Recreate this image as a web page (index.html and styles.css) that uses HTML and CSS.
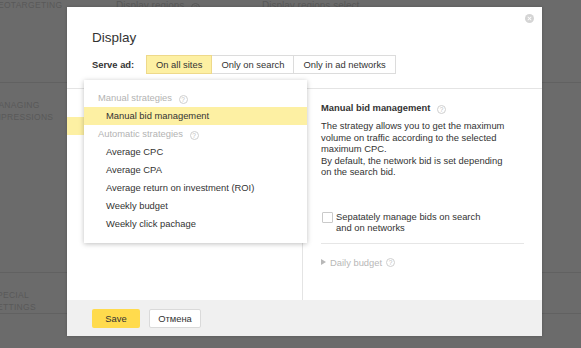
FILE: index.html
```html
<!DOCTYPE html>
<html lang="en">
<head>
  <meta charset="UTF-8">
  <title>Display strategy</title>
  <link rel="stylesheet" href="styles.css">
</head>
<body>

<!-- Campaign page behind the dialog -->
<div class="page">
  <div class="section section-geo">
    <div class="section-title">Geotargeting</div>
    <div class="section-field">Display regions <span class="hint">?</span></div>
    <div class="section-field">Display regions select</div>
  </div>
  <div class="section section-impressions">
    <div class="section-title">Managing<br>impressions</div>
  </div>
  <div class="section section-special">
    <div class="section-title">Special<br>settings</div>
  </div>
</div>

<!-- Dialog -->
<div class="modal">
  <div class="modal-head">
    <h2 class="modal-title">Display</h2>
    <div class="serve-row">
      <span class="serve-label">Serve ad:</span>
      <div class="seg">
        <button class="seg-btn seg-btn-active">On all sites</button>
        <button class="seg-btn">Only on search</button>
        <button class="seg-btn">Only in ad networks</button>
      </div>
    </div>
    <span class="close-btn"></span>
  </div>

  <div class="modal-body">
    <div class="body-left">
      <div class="strategy-current"></div>
    </div>
    <div class="body-right">
      <div class="info-title">Manual bid management <span class="hint">?</span></div>
      <p class="info-text">
        The strategy allows you to get the maximum<br>
        volume on traffic according to the selected<br>
        maximum CPC.<br>
        By default, the network bid is set depending<br>
        on the search bid.
      </p>
      <label class="check-row">
        <span class="checkbox"></span>
        <span>Sepatately manage bids on search<br>and on networks</span>
      </label>
      <div class="daily-budget"><span class="arrow"></span>Daily budget <span class="hint">?</span></div>
    </div>
  </div>

  <div class="modal-foot">
    <button class="btn btn-save">Save</button>
    <button class="btn btn-cancel">Отмена</button>
  </div>

  <!-- Strategy dropdown -->
  <div class="dropdown">
    <div class="dd-group">Manual strategies <span class="hint">?</span></div>
    <div class="dd-item dd-item-active">Manual bid management</div>
    <div class="dd-group">Automatic strategies <span class="hint">?</span></div>
    <div class="dd-item">Average CPC</div>
    <div class="dd-item">Average CPA</div>
    <div class="dd-item">Average return on investment (ROI)</div>
    <div class="dd-item">Weekly budget</div>
    <div class="dd-item">Weekly click pachage</div>
  </div>
</div>

</body>
</html>
```

FILE: styles.css
```css
/* Reset */
* {
  margin: 0;
  padding: 0;
  box-sizing: border-box;
}
body {
  font-family: "Liberation Sans", Arial, sans-serif;
  font-size: 9.4px;
  color: #333;
  background-color: #6b6b6b;
  width: 581px;
  height: 348px;
  overflow: hidden;
  position: relative;
}

/* Page behind the overlay */
.section {
  border-bottom: 1px solid #616161;
  display: grid;
  grid-template-columns: 116px 146px 1fr;
}
.section-title {
  margin-left: -9px;
  text-transform: uppercase;
  font-size: 8.5px;
  letter-spacing: 0.3px;
  line-height: 11.5px;
  color: #595959;
}
.section-field {
  color: #595959;
  line-height: 11.5px;
  font-size: 10px;
}
.section-geo {
  height: 83px;
  padding-top: 0;
}
.section-impressions {
  height: 190px;
  padding-top: 17px;
}
.section-special {
  padding-top: 17px;
}

/* Dialog */
.modal {
  position: absolute;
  left: 67px;
  top: 7px;
  width: 475px;
  height: 329px;
  background-color: white;
  box-shadow: 0 0 3px rgba(0,0,0,0.2);
  display: flex;
  flex-direction: column;
}
.modal-head {
  position: relative;
  height: 82px;
  padding: 23px 25px 0;
  border-bottom: 1px solid #e4e4e4;
}
.modal-title {
  font-size: 13.5px;
  font-weight: normal;
  line-height: 16px;
  color: #333;
}
.serve-row {
  display: flex;
  align-items: center;
  margin-top: 9px;
}
.serve-label {
  width: 55px;
  font-weight: bold;
}
.seg {
  display: flex;
}
.seg-btn {
  font-family: inherit;
  font-size: 9.4px;
  color: #333;
  height: 19px;
  padding: 0 9px;
  background-color: white;
  border: 1px solid #dcdcdc;
  margin-left: -1px;
}
.seg-btn-active {
  background-color: #fdf0a3;
  border-color: #eed98a;
  position: relative;
}
.close-btn {
  position: absolute;
  top: 7px;
  right: 8px;
  width: 9px;
  height: 9px;
  border-radius: 50%;
  background-color: #d4d4d4;
}
.close-btn::before,
.close-btn::after {
  content: "";
  position: absolute;
  left: 2px;
  top: 4px;
  width: 5px;
  height: 1px;
  background-color: white;
  transform: rotate(45deg);
}
.close-btn::after {
  transform: rotate(-45deg);
}

.modal-body {
  flex: 1;
  display: flex;
}
.body-left {
  width: 236px;
  border-right: 1px solid #e4e4e4;
}
.strategy-current {
  margin-top: 28px;
  height: 18px;
  background-color: #fdf0a3;
}
.body-right {
  flex: 1;
  padding: 13px 18px 0 18px;
}
.info-title {
  font-weight: bold;
  line-height: 12px;
}
.info-text {
  margin-top: 6px;
  line-height: 11.5px;
}
.check-row {
  display: flex;
  margin-top: 33px;
  padding-bottom: 9px;
  border-bottom: 1px solid #e6e6e6;
  line-height: 11.5px;
}
.checkbox {
  width: 11px;
  height: 11px;
  margin: 1px 3px 0 1px;
  border: 1px solid #cacaca;
  border-radius: 1px;
  flex-shrink: 0;
}
.daily-budget {
  margin-top: 13px;
  line-height: 11.5px;
  color: #b8b8b8;
  display: flex;
  align-items: center;
}
.arrow {
  width: 0;
  height: 0;
  border-left: 5px solid #b8b8b8;
  border-top: 3px solid transparent;
  border-bottom: 3px solid transparent;
  margin-right: 4px;
}

.hint {
  display: inline-block;
  width: 9px;
  height: 9px;
  margin-left: 4px;
  border: 1px solid #cfcfcf;
  border-radius: 50%;
  font-size: 6.5px;
  font-weight: normal;
  line-height: 7px;
  text-align: center;
  color: #c0c0c0;
  vertical-align: -1px;
}
.section-field .hint {
  border-color: #595959;
  color: #595959;
}

.modal-foot {
  height: 36px;
  padding: 9px 25px 0;
  background-color: #f0f0f0;
  display: flex;
  align-items: flex-start;
}
.btn {
  font-family: inherit;
  font-size: 9.4px;
  color: #333;
  height: 19px;
  border-radius: 2px;
  cursor: pointer;
}
.btn-save {
  width: 48px;
  border: none;
  background-color: #ffdb4d;
}
.btn-cancel {
  width: 52px;
  margin-left: 9px;
  border: 1px solid #dadada;
  background-color: white;
}

/* Strategy dropdown */
.dropdown {
  position: absolute;
  left: 17px;
  top: 73px;
  width: 223px;
  height: 163px;
  padding: 9px 0;
  background-color: white;
  box-shadow: 0 1px 5px rgba(0,0,0,0.25);
}
.dd-group,
.dd-item {
  height: 18px;
  line-height: 18px;
}
.dd-group {
  padding-left: 14px;
  color: #b3b3b3;
}
.dd-item {
  padding-left: 22px;
}
.dd-item-active {
  background-color: #fdf0a3;
}
```
